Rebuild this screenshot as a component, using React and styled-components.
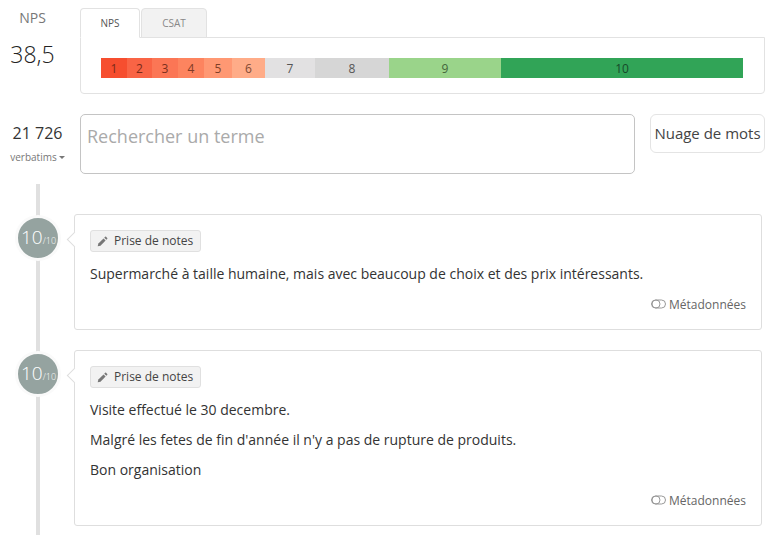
import React from 'react'
import styled, { createGlobalStyle } from 'styled-components'

const segments = [
  { label: '1', width: 26, bg: '#f64e2f', color: '#7a2a18' },
  { label: '2', width: 25, bg: '#f96445', color: '#7a2a18' },
  { label: '3', width: 26, bg: '#fb7655', color: '#7a2f1c' },
  { label: '4', width: 26, bg: '#fd845f', color: '#7f3a24' },
  { label: '5', width: 28, bg: '#ff9873', color: '#7f4028' },
  { label: '6', width: 33, bg: '#ffac88', color: '#7f4a34' },
  { label: '7', width: 50, bg: '#e2e1e2', color: '#555' },
  { label: '8', width: 74, bg: '#d6d6d6', color: '#555' },
  { label: '9', width: 112, bg: '#9ad48a', color: '#44663c' },
  { label: '10', width: 242, bg: '#31a457', color: '#17482a' },
]

const verbatims = [
  { id: 1, lines: ['Supermarché à taille humaine, mais avec beaucoup de choix et des prix intéressants.'] },
  {
    id: 2,
    lines: [
      'Visite effectué le 30 decembre.',
      "Malgré les fetes de fin d'année il n'y a pas de rupture de produits.",
      'Bon organisation',
    ],
  },
]

const App = () => {
  return (
    <>
      <GlobalStyle />
      <Page>
        <TopRow>
          <ScoreBlock>
            <ScoreTitle>NPS</ScoreTitle>
            <ScoreValue>38,5</ScoreValue>
          </ScoreBlock>
          <TabsBlock>
            <TabList>
              <Tab active>NPS</Tab>
              <Tab>CSAT</Tab>
            </TabList>
            <TabPanel>
              <Bar>
                {segments.map(s => (
                  <Segment key={s.label} $width={s.width} $bg={s.bg} $color={s.color}>
                    {s.label}
                  </Segment>
                ))}
              </Bar>
            </TabPanel>
          </TabsBlock>
        </TopRow>

        <SearchRow>
          <CountBlock>
            <Count>21 726</Count>
            <CountLabel>
              verbatims<Caret />
            </CountLabel>
          </CountBlock>
          <SearchBox placeholder="Rechercher un terme" />
          <CloudButton>Nuage de mots</CloudButton>
        </SearchRow>

        <Timeline>
          {verbatims.map(v => (
            <Item key={v.id}>
              <Badge>
                10<small>/10</small>
              </Badge>
              <Card>
                <Tag>
                  <svg width="11" height="11" viewBox="0 0 12 12">
                    <path d="M0.8 11.2l0.7-3 5.6-5.6 2.3 2.3-5.6 5.6z" fill="#777" />
                    <path d="M7.9 1.8l0.9-0.9a0.8 0.8 0 0 1 1.1 0l1.2 1.2a0.8 0.8 0 0 1 0 1.1l-0.9 0.9z" fill="#777" />
                  </svg>
                  Prise de notes
                </Tag>
                {v.lines.map(line => (
                  <Text key={line}>{line}</Text>
                ))}
                <CardFooter>
                  <svg width="15" height="10" viewBox="0 0 15 10" fill="none" stroke="#999" strokeWidth="1">
                    <rect x="0.5" y="1" width="14" height="8" rx="4" />
                    <circle cx="5" cy="5" r="4" />
                  </svg>
                  Métadonnées
                </CardFooter>
              </Card>
            </Item>
          ))}
        </Timeline>
      </Page>
    </>
  )
}

const GlobalStyle = createGlobalStyle`
  html, body {
    margin: 0;
    padding: 0;
    background: #fff;
    overflow: hidden;
  }
  * {
    box-sizing: border-box;
  }
  body {
    font-family: "Open Sans", "Liberation Sans", sans-serif;
    color: #333;
  }
`

const Page = styled.div`
  width: 780px;
  height: 535px;
  padding: 8px 15px 0 0;
  overflow: hidden;
`

const TopRow = styled.div`
  display: flex;
  height: 86px;
`

const ScoreBlock = styled.div`
  flex: none;
  width: 80px;
  padding-right: 15px;
  text-align: center;
`

const ScoreTitle = styled.div`
  font-size: 14px;
  line-height: 20px;
  color: #777;
`

const ScoreValue = styled.div`
  margin-top: 11px;
  font-size: 23px;
  font-weight: 300;
  line-height: 30px;
  color: #222;
`

const TabsBlock = styled.div`
  flex: 1;
  display: flex;
  flex-direction: column;
`

const TabList = styled.div`
  display: flex;
  height: 30px;
  margin-bottom: -1px;
`

const Tab = styled.div`
  width: ${props => (props.active ? '60px' : '66px')};
  margin-right: 1px;
  font-size: 10px;
  line-height: 29px;
  text-align: center;
  color: ${props => (props.active ? '#555' : '#888')};
  background: ${props => (props.active ? '#fff' : '#f2f2f2')};
  border: 1px solid #e2e2e2;
  border-bottom-color: ${props => (props.active ? '#fff' : '#e2e2e2')};
  border-radius: 4px 4px 0 0;
  position: relative;
  z-index: ${props => (props.active ? 1 : 0)};
`

const TabPanel = styled.div`
  flex: 1;
  padding: 20px 21px 15px 20px;
  border: 1px solid #e2e2e2;
  border-radius: 0 0 4px 4px;
`

const Bar = styled.div`
  display: flex;
  height: 20px;
`

const Segment = styled.div`
  width: ${props => props.$width}px;
  font-size: 12px;
  line-height: 21px;
  text-align: center;
  background: ${props => props.$bg};
  color: ${props => props.$color};
`

const SearchRow = styled.div`
  display: flex;
  align-items: flex-start;
  margin-top: 20px;
`

const CountBlock = styled.div`
  flex: none;
  width: 75px;
  text-align: center;
`

const Count = styled.div`
  margin-top: 8px;
  font-size: 16px;
  line-height: 22px;
  color: #333;
`

const CountLabel = styled.div`
  margin-top: 5px;
  font-size: 10px;
  line-height: 16px;
  color: #777;
`

const Caret = styled.span`
  display: inline-block;
  margin-left: 2px;
  vertical-align: 2px;
  border-top: 3px solid #777;
  border-left: 3px solid transparent;
  border-right: 3px solid transparent;
`

const SearchBox = styled.input`
  width: 555px;
  height: 60px;
  margin-left: 5px;
  padding: 0 6px 17px;
  font-family: inherit;
  font-size: 18px;
  color: #333;
  border: 1px solid #c4c4c4;
  border-radius: 5px;
  outline: none;
  &::placeholder {
    color: #aaa;
    opacity: 1;
  }
`

const CloudButton = styled.div`
  width: 115px;
  height: 39px;
  margin-left: 15px;
  font-size: 15px;
  line-height: 37px;
  text-align: center;
  white-space: nowrap;
  color: #444;
  border: 1px solid #e4e4e4;
  border-radius: 6px;
`

const Timeline = styled.div`
  position: relative;
  display: flex;
  flex-direction: column;
  gap: 20px;
  margin-top: 10px;
  padding: 30px 3px 0 74px;
  &::before {
    content: '';
    position: absolute;
    left: 36px;
    top: 0;
    bottom: -100px;
    width: 4px;
    background: #e0e0e0;
  }
`

const Item = styled.div`
  position: relative;
`

const Badge = styled.div`
  position: absolute;
  left: -59px;
  top: 1px;
  width: 46px;
  height: 46px;
  padding-left: 1px;
  border: 3px solid #fafafa;
  border-radius: 50%;
  background: #95a3a0;
  color: #fff;
  font-size: 19px;
  font-weight: 300;
  line-height: 39px;
  text-align: center;
  white-space: nowrap;
  small {
    font-size: 9px;
  }
`

const Card = styled.div`
  position: relative;
  padding: 15px;
  background: #fff;
  border: 1px solid #dedede;
  border-radius: 3px;
  &::before {
    content: '';
    position: absolute;
    left: -6px;
    top: 19px;
    width: 10px;
    height: 10px;
    background: #fff;
    border-left: 1px solid #dedede;
    border-bottom: 1px solid #dedede;
    transform: rotate(45deg);
  }
`

const Tag = styled.div`
  display: flex;
  width: fit-content;
  align-items: center;
  gap: 6px;
  height: 22px;
  padding: 0 7px 2px 6px;
  margin-bottom: 12px;
  font-size: 12px;
  color: #444;
  background: #f2f2f2;
  border: 1px solid #e0e0e0;
  border-radius: 3px;
  svg {
    margin-top: 2px;
  }
`

const Text = styled.p`
  margin: 0 0 10px;
  font-size: 14px;
  line-height: 20px;
  color: #333;
`

const CardFooter = styled.div`
  display: flex;
  justify-content: flex-end;
  align-items: center;
  gap: 3px;
  margin-top: 10px;
  height: 20px;
  font-size: 12px;
  color: #666;
`

export default App
